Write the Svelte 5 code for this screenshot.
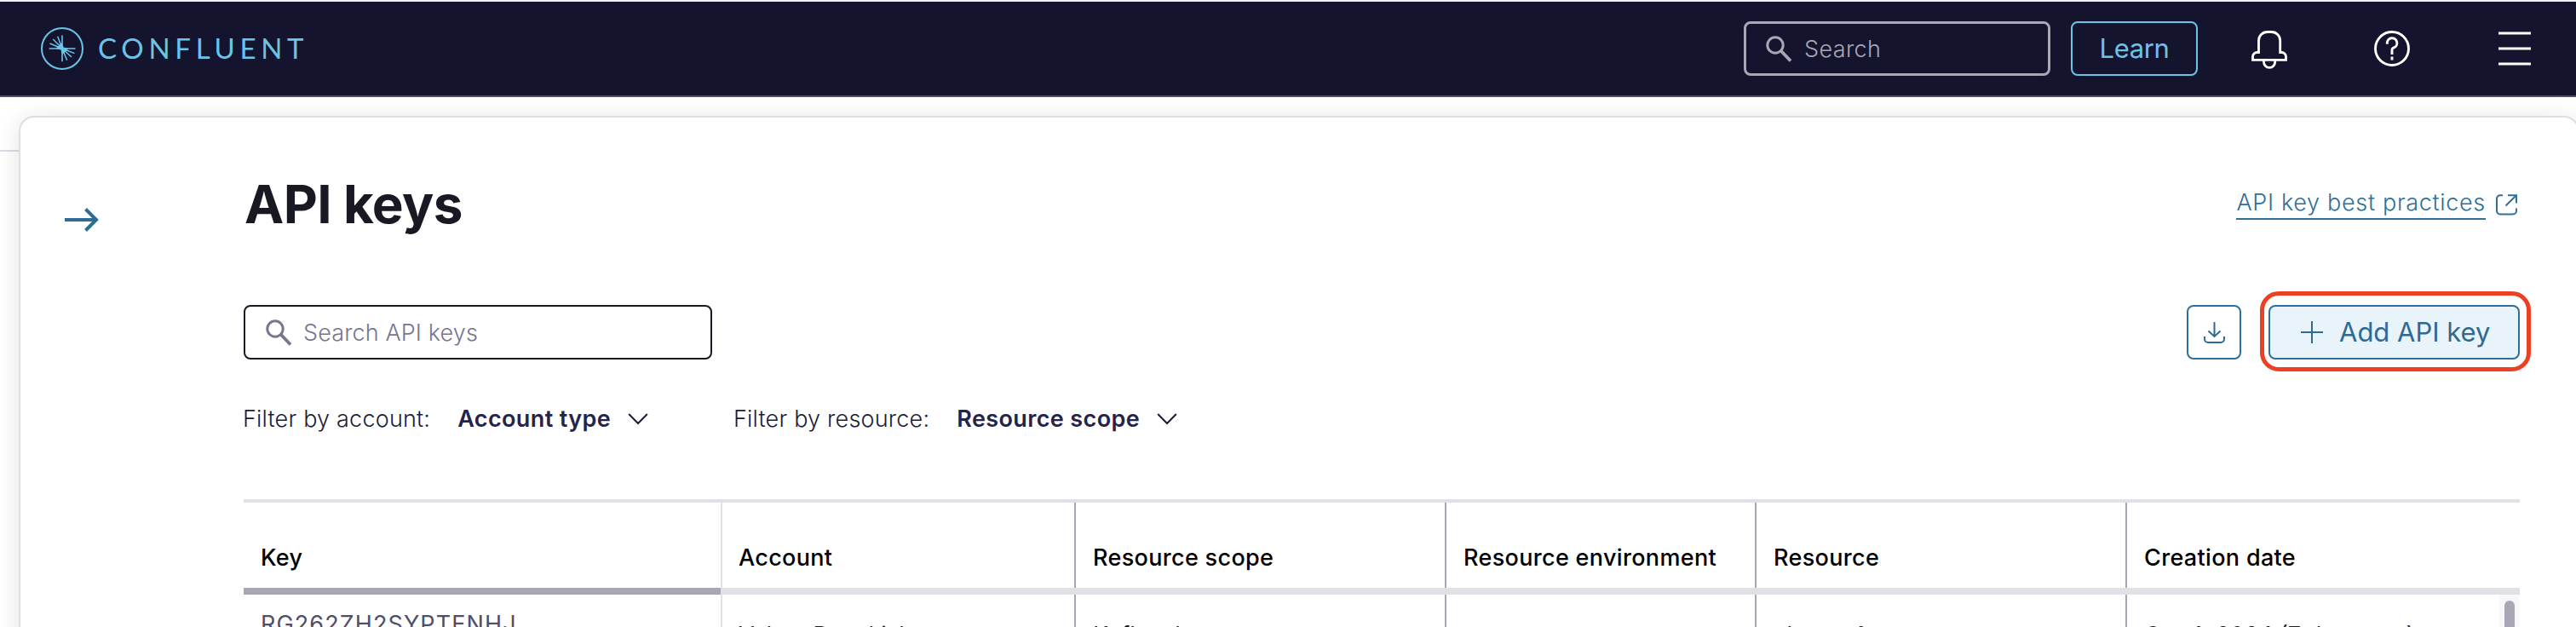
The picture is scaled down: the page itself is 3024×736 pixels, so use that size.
<script>
  const columns = [
    'Key',
    'Account',
    'Resource scope',
    'Resource environment',
    'Resource',
    'Creation date'
  ];
  const row = ['RG262ZH2SYPTENHJ', 'Valera Devakish', 'Kafka cluster', '', 'cluster_1', 'Oct 4, 2024 (7 days ago)'];
  const filters = [
    { label: 'Filter by account:', value: 'Account type' },
    { label: 'Filter by resource:', value: 'Resource scope' }
  ];
</script>

{#snippet magnifier()}
  <svg class="magnifier" width="31" height="31" viewBox="0 0 31 31" fill="none" stroke="currentColor">
    <circle cx="11" cy="11" r="9.2" stroke-width="3" />
    <path d="M17.5 17.5L29 29.5" stroke-width="3.8" />
  </svg>
{/snippet}

<div class="app">
  <header>
    <div class="brand">
      <svg width="50" height="50" viewBox="0 0 50 50" fill="none" stroke="currentColor">
        <circle cx="25" cy="25" r="24" stroke-width="2" />
        <path d="M9.7 25H40.5M25 9.4V40.2" stroke-width="1.6" />
        <path d="M10.5 19L25 25L14.3 14M19.7 10.7L25 25M39.5 30.6L25 25L36 35M30.7 38.7L25 25" stroke-width="1.5" />
        <path d="M25 17.5L26.5 23.5L32.5 25L25 32L23.5 26.5L17.5 25Z" fill="currentColor" stroke="none" />
      </svg>
      <span>CONFLUENT</span>
    </div>
    <div class="global-search">{@render magnifier()}<span>Search</span></div>
    <button class="learn">Learn</button>
    <svg class="bell" width="42" height="46" viewBox="0 0 42 46" fill="none" stroke="currentColor" stroke-width="2.8">
      <path d="M8.5 25.5V11.5a10 10 0 0 1 10-10h5.2a10 10 0 0 1 10 10V25.5h1.8a5 5 0 0 1 5 5V34.4H1.5V30.5a5 5 0 0 1 5-5h3.4" />
      <path d="M14.5 35v1.8a6.6 6.6 0 0 0 13.2 0V35" />
    </svg>
    <svg class="help" width="42" height="42" viewBox="0 0 42 42" fill="none" stroke="currentColor" stroke-width="2.9">
      <circle cx="21" cy="21" r="19.5" />
      <path d="M15.3 15.8V14.6a5.8 5.8 0 1 1 8 5.3Q21 20.8 21 22.6V28" />
      <path d="M21 30.5V34.5" />
    </svg>
    <svg class="menu" width="38" height="40" viewBox="0 0 38 40" fill="none" stroke="currentColor" stroke-width="3">
      <path d="M0 2H38M0 20H38M0 38H38" />
    </svg>
  </header>

  <div class="stage">
    <div class="rule"></div>
    <section class="panel">
      <aside>
        <svg width="40" height="28" viewBox="0 0 40 28" fill="none" stroke="currentColor" stroke-width="4">
          <path d="M0 14H37M24.5 1.5L37 14L24.5 26.5" />
        </svg>
      </aside>
      <main>
        <div class="title-row">
          <h1>API keys</h1>
          <div class="docs">
            <span>API key best practices</span>
            <svg width="25" height="25" viewBox="0 0 25 25" fill="none" stroke="currentColor" stroke-width="2">
              <path d="M8 1.2H5a4 4 0 0 0-4 4V19.5a4 4 0 0 0 4 4h15a4 4 0 0 0 4-4V16.5M14 1.2H24V10.5M24 1.2L11.5 13.5" />
            </svg>
          </div>
        </div>

        <div class="toolbar">
          <div class="key-search">{@render magnifier()}<span>Search API keys</span></div>
          <button class="download" aria-label="Download">
            <svg width="25" height="25" viewBox="0 0 25 25" fill="none" stroke="currentColor" stroke-width="2">
              <path d="M12.5 0V17M5.5 10.5L12.5 17L19.5 10.5M1 17v3a4 4 0 0 0 4 4h15a4 4 0 0 0 4-4v-3" />
            </svg>
          </button>
          <div class="highlight">
            <button class="add">
              <svg width="26" height="26" viewBox="0 0 26 26" stroke="currentColor" stroke-width="2">
                <path d="M13 0V26M0 13H26" />
              </svg>
              <span>Add API key</span>
            </button>
          </div>
        </div>

        <div class="filters">
          {#each filters as f}
            <div class="filter">
              <span>{f.label}</span>
              <strong>{f.value}</strong>
              <svg width="24" height="14" viewBox="0 0 24 14" fill="none" stroke="currentColor" stroke-width="2">
                <path d="M1.2 1L12 12L22.8 1" />
              </svg>
            </div>
          {/each}
        </div>

        <div class="table">
          <div class="grid head">
            {#each columns as c}<div class="cell">{c}</div>{/each}
          </div>
          <div class="underline"><i></i></div>
          <div class="grid body">
            {#each row as r}<div class="cell">{r}</div>{/each}
            <div class="scrollbar"><i></i></div>
          </div>
        </div>
      </main>
    </section>
  </div>
</div>

<style>
  :global(body) {
    background: #fff;
  }
  .app {
    box-sizing: border-box;
    width: 3024px;
    height: 736px;
    overflow: hidden;
    display: flex;
    flex-direction: column;
    border-top: 2px solid #eef1fb;
    font-family: Inter, 'Liberation Sans', sans-serif;
    font-size: 27px;
    line-height: 40px;
    color: #191924;
  }
  svg {
    display: block;
    flex: none;
  }
  button {
    font: inherit;
    margin: 0;
    padding: 0;
    background: none;
  }
  header {
    flex: none;
    height: 110px;
    background: #15142e;
    border-bottom: 2px solid #504e68;
    display: flex;
    align-items: center;
    color: #fff;
    padding: 0 53px 0 48px;
  }
  .brand {
    display: flex;
    align-items: center;
    color: #6bc4e8;
    margin-right: auto;
  }
  .brand span {
    font: 400 33px/40px Lato, sans-serif;
    letter-spacing: 5.7px;
    margin: -2px 0 0 17px;
  }
  .global-search,
  .key-search {
    box-sizing: border-box;
    height: 64px;
    display: flex;
    align-items: center;
    border-radius: 8px;
    font-weight: 300;
  }
  .global-search {
    width: 360px;
    border: 3px solid #a9a7b6;
    color: #a9a7b6;
    padding-left: 23px;
    letter-spacing: 0.36px;
  }
  .global-search span {
    margin: 2px 0 0 14px;
  }
  .learn {
    box-sizing: border-box;
    width: 149px;
    height: 64px;
    margin-left: 24px;
    border: 2px solid #6bc4e8;
    border-radius: 8px;
    color: #6bc4e8;
    font-size: 31px;
    letter-spacing: -0.35px;
  }
  .bell {
    margin: 3px 0 0 63px;
  }
  .help {
    margin-left: 102px;
  }
  .menu {
    margin-left: 104px;
  }
  .stage {
    flex: 1;
    display: flex;
    padding-top: 22px;
  }
  .rule {
    flex: none;
    width: 22px;
    height: 2px;
    margin-top: 40px;
    background: #dcdbe5;
  }
  .panel {
    box-sizing: border-box;
    width: 3006px;
    height: 640px;
    flex: none;
    border: 2px solid #dfdfe0;
    border-radius: 18px;
    background: #fff;
    box-shadow: 0 4px 30px rgba(0, 0, 0, 0.11);
    clip-path: inset(-22px -10px 0 -22px);
    display: flex;
  }
  aside {
    flex: none;
    width: 210px;
    padding: 106px 0 0 52px;
    color: #2d6c95;
  }
  main {
    flex: none;
    width: 2672px;
    padding-top: 60px;
  }
  .title-row {
    height: 80px;
    display: flex;
    align-items: center;
    justify-content: space-between;
  }
  h1 {
    margin: 3px 0 0 1px;
    font-size: 62px;
    line-height: 80px;
    font-weight: 700;
    letter-spacing: -0.65px;
    color: #191924;
  }
  .docs {
    display: flex;
    align-items: center;
    color: #2e7099;
    margin-right: 3px;
  }
  .docs span {
    height: 38px;
    margin-right: 12px;
    border-bottom: 2px solid #2e7099;
    letter-spacing: 0.68px;
    font-weight: 350;
  }
  .docs svg {
    margin-top: 5px;
  }
  .toolbar {
    margin-top: 80px;
    display: flex;
    align-items: center;
  }
  .key-search {
    width: 550px;
    border: 2px solid #191924;
    padding-left: 24px;
    color: #77758f;
    margin-right: auto;
    letter-spacing: 0.12px;
  }
  .key-search span {
    margin: 2px 0 0 13px;
  }
  .download,
  .add {
    box-sizing: border-box;
    height: 64px;
    border: 2px solid #2e7099;
    border-radius: 8px;
    color: #2e6a92;
    display: flex;
    align-items: center;
  }
  .download {
    width: 64px;
    justify-content: center;
    margin-right: 32px;
  }
  .highlight {
    position: relative;
  }
  .highlight::after {
    content: '';
    position: absolute;
    inset: -16px -13px -14px -10px;
    border: 5px solid #ec4025;
    border-radius: 22px;
    pointer-events: none;
  }
  .add {
    width: 295px;
    background: #e8f3fa;
    padding-left: 36px;
    font-size: 31px;
  }
  .add span {
    margin-left: 19px;
  }
  .filters {
    margin-top: 50px;
    display: flex;
    color: #1d1c38;
  }
  .filter {
    display: flex;
    align-items: center;
    width: 576px;
  }
  .filter span {
    margin-right: 32px;
    margin-left: -1px;
    font-weight: 350;
    letter-spacing: 0.2px;
  }
  .filter strong {
    font-weight: 600;
    letter-spacing: 0.38px;
    color: #24234a;
    margin-right: 20px;
  }
  .table {
    margin-top: 74px;
    border-top: 4px solid #e1e0e7;
  }
  .grid {
    display: grid;
    grid-template-columns: 560px 415px 435px 364px 435px 463px;
  }
  .cell {
    box-sizing: border-box;
    padding-left: 20px;
    border-left: 2px solid #a9a7b6;
    white-space: nowrap;
  }
  .cell:first-child {
    border-left: 0;
  }
  .cell:nth-child(2) {
    padding-left: 19px;
    border-left-color: #e1e0e7;
  }
  .head {
    height: 100px;
    color: #000;
    font-weight: 500;
    letter-spacing: 0.33px;
  }
  .head .cell {
    padding-top: 45px;
  }
  .underline {
    height: 8px;
    background: #e1e0e7;
  }
  .underline i {
    display: block;
    width: 560px;
    height: 8px;
    background: #a9a7b6;
  }
  .body {
    position: relative;
    height: 100px;
    color: #1d1c38;
  }
  .body .cell {
    padding-top: 28px;
  }
  .body .cell:first-child {
    padding-top: 15px;
    letter-spacing: 1.1px;
    color: #504e68;
  }
  .scrollbar {
    position: absolute;
    right: 0;
    top: 0;
    box-sizing: border-box;
    width: 24px;
    height: 100%;
    padding: 7px 6px 0;
    background: #f8f8fa;
  }
  .scrollbar i {
    display: block;
    height: 100%;
    border-radius: 6px;
    background: #a9a7b6;
  }
</style>
